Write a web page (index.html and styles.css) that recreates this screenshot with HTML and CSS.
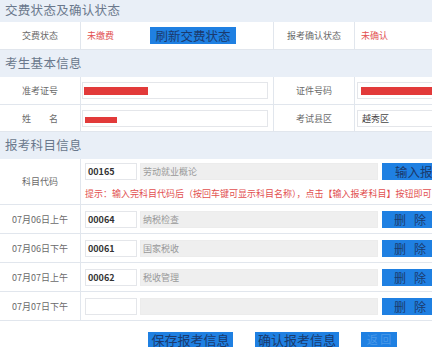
FILE: index.html
```html
<!DOCTYPE html>
<html lang="zh">
<head>
<meta charset="utf-8">
<title>报考信息</title>
<link rel="stylesheet" href="styles.css">
</head>
<body>
<div class="page">
  <div class="sec sec1">交费状态及确认状态</div>
  <div class="row row1">
    <div class="lbl">交费状态</div>
    <div class="val v1"><span class="red">未缴费</span><span class="btn btn-refresh">刷新交费状态</span></div>
    <div class="lbl lbl2">报考确认状态</div>
    <div class="val v2"><span class="red">未确认</span></div>
  </div>

  <div class="sec sec2">考生基本信息</div>
  <div class="row row2">
    <div class="lbl">准考证号</div>
    <div class="val v1"><div class="inp inp-wide"><span class="redact redact-a"></span></div></div>
    <div class="lbl lbl2">证件号码</div>
    <div class="val v2"><div class="inp inp-right"><span class="redact redact-b"></span></div></div>
  </div>
  <div class="row row3">
    <div class="lbl">姓　　名</div>
    <div class="val v1"><div class="inp inp-wide"><span class="redact redact-c"></span></div></div>
    <div class="lbl lbl2">考试县区</div>
    <div class="val v2"><div class="inp inp-right"><span class="dark">越秀区</span></div></div>
  </div>

  <div class="sec sec3">报考科目信息</div>
  <div class="row row-code">
    <div class="lbl">科目代码</div>
    <div class="subj subj-col">
      <div class="subj-line">
        <div class="inp inp-code">00165</div>
        <div class="inp inp-name">劳动就业概论</div>
        <span class="btn btn-add">输入报考科目</span>
      </div>
      <div class="hint">提示：输入完科目代码后（按回车键可显示科目名称），点击【输入报考科目】按钮即可</div>
    </div>
  </div>
  <div class="row row-s">
    <div class="lbl">07月06日上午</div>
    <div class="subj subj-line">
      <div class="inp inp-code">00064</div>
      <div class="inp inp-name">纳税检查</div>
      <span class="btn btn-del">删除</span>
    </div>
  </div>
  <div class="row row-s">
    <div class="lbl">07月06日下午</div>
    <div class="subj subj-line">
      <div class="inp inp-code">00061</div>
      <div class="inp inp-name">国家税收</div>
      <span class="btn btn-del">删除</span>
    </div>
  </div>
  <div class="row row-s">
    <div class="lbl">07月07日上午</div>
    <div class="subj subj-line">
      <div class="inp inp-code">00062</div>
      <div class="inp inp-name">税收管理</div>
      <span class="btn btn-del">删除</span>
    </div>
  </div>
  <div class="row row-s">
    <div class="lbl">07月07日下午</div>
    <div class="subj subj-line">
      <div class="inp inp-code"></div>
      <div class="inp inp-name"></div>
      <span class="btn btn-del">删除</span>
    </div>
  </div>

  <div class="footer">
    <span class="btn btn-foot btn-save">保存报考信息</span>
    <span class="btn btn-foot btn-confirm">确认报考信息</span>
    <span class="btn btn-foot btn-back">返 回</span>
  </div>
</div>
</body>
</html>
```

FILE: styles.css
```css
html, body {
  margin: 0;
  padding: 0;
  overflow: hidden;
  background: #ffffff;
}
body {
  font-family: "Noto Sans CJK SC", "Noto Sans", sans-serif;
  color: #666;
}
.page {
  width: 480px;
}
.sec {
  background: #e9eff7;
  color: #6a788c;
  font-size: 12.5px;
  padding-left: 5px;
  box-sizing: border-box;
  letter-spacing: 0.3px;
}
.sec1 { height: 22px; line-height: 19px; }
.sec2 { height: 27px; line-height: 25px; }
.sec3 { height: 27px; line-height: 26px; }

.row {
  display: flex;
  border-bottom: 1px solid #e1e6ed;
  box-sizing: border-box;
}
.row1 { height: 28px; }
.row2 { height: 28px; }
.row3 { height: 27px; }
.row-code { height: 46px; }
.row-s { height: 29px; }

.lbl {
  width: 81px;
  flex: none;
  border-right: 1px solid #e1e6ed;
  box-sizing: border-box;
  display: flex;
  align-items: center;
  justify-content: center;
  font-size: 9px;
  color: #6a6a6a;
  white-space: nowrap;
}
.lbl2 { width: 81px; }
.val {
  display: flex;
  align-items: center;
  box-sizing: border-box;
  font-size: 9px;
}
.v1 {
  width: 193px;
  flex: none;
  border-right: 1px solid #e1e6ed;
}
.row1 .v1 { padding-left: 6px; }
.row2 .v1, .row3 .v1 { padding-left: 1px; }
.v2 { flex: 1; padding-left: 2px; }
.row1 .v2 { padding-left: 6px; }

.red { color: #e25050; font-size: 9px; }
.dark { color: #444; font-size: 9px; }

.btn {
  display: inline-block;
  background: #1f80e2;
  color: #1b3a6d;
  text-align: center;
  box-sizing: border-box;
  white-space: nowrap;
}
.btn-refresh {
  margin-left: 36px;
  width: 86px;
  height: 17px;
  line-height: 17px;
  font-size: 12.5px;
}

.inp {
  height: 17px;
  box-sizing: border-box;
  border: 1px solid #e4e6ea;
  background: #fff;
  display: flex;
  align-items: center;
  font-size: 9px;
  flex: none;
}
.inp-wide { width: 186px; }
.inp-right { width: 120px; padding-left: 4px; }

.redact {
  display: block;
  background: #e23a3a;
}
.redact-a { width: 64px; height: 8px; margin-left: 1px; }
.redact-b { width: 90px; height: 8px; margin-left: -1px; }
.redact-c { width: 32px; height: 6px; margin-left: 2px; margin-top: 3px; }

.subj {
  flex: 1;
  padding-left: 4px;
  box-sizing: border-box;
}
.subj-col {
  display: flex;
  flex-direction: column;
  padding-top: 4px;
}
.subj-line {
  display: flex;
  align-items: center;
}
.inp-code {
  width: 52px;
  padding-left: 2px;
  color: #333;
  font-weight: 600;
}
.inp-name {
  width: 238px;
  margin-left: 3px;
  background: #efefef;
  border-color: #ececec;
  padding-left: 2px;
  color: #999;
}
.btn-add {
  margin-left: 4px;
  width: 90px;
  height: 17px;
  line-height: 17px;
  font-size: 12.5px;
  text-align: left;
  padding-left: 13px;
}
.btn-del {
  margin-left: 4px;
  width: 60px;
  height: 17px;
  line-height: 17px;
  font-size: 12px;
  text-align: left;
  padding-left: 12px;
  letter-spacing: 8px;
}
.hint {
  margin-top: 7px;
  line-height: 14px;
  font-size: 9px;
  color: #e25050;
  white-space: nowrap;
}

.footer {
  height: 38px;
  display: flex;
  align-items: flex-start;
  padding-top: 11px;
  padding-left: 148px;
  box-sizing: border-box;
  gap: 22px;
}
.btn-foot {
  height: 15px;
  line-height: 15px;
  font-size: 13px;
}
.btn-save { width: 85px; }
.btn-confirm { width: 84px; }
.btn-back { width: 36px; color: #4c9ae9; font-size: 11px; }
```
